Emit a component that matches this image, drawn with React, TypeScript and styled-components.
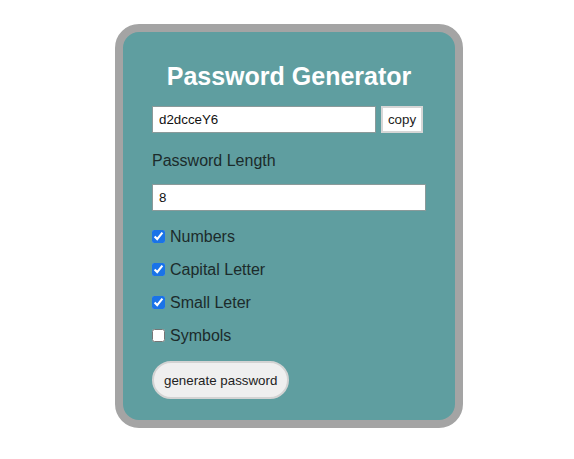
import React from "react";
import styled, { createGlobalStyle } from "styled-components";

const Global = createGlobalStyle`
  html, body { margin: 0; padding: 0; background: #ffffff; }
  body { font-family: "Liberation Sans", Arial, sans-serif; }
`;

const Page = styled.div`
  display: flex;
  justify-content: center;
  padding-top: 24px;
  padding-left: 4px;
`;

const Card = styled.div`
  box-sizing: border-box;
  width: 348px;
  height: 404px;
  border: 8px solid #a4a4a4;
  border-radius: 24px;
  background: #5f9ea0;
  padding: 29px 29px 0 29px;
  display: flex;
  flex-direction: column;
  align-items: flex-start;
`;

const Title = styled.h1`
  align-self: stretch;
  margin: 0;
  text-align: center;
  color: #ffffff;
  font-size: 25px;
  line-height: 30px;
  font-weight: bold;
`;

const Row = styled.div`
  display: flex;
  gap: 5px;
  margin-top: 15px;
`;

const TextInput = styled.input<{ $w: number }>`
  box-sizing: border-box;
  width: ${(p) => p.$w}px;
  height: 27px;
  border: 1px solid #8a9a9a;
  background: #ffffff;
  font-family: "Liberation Sans", Arial, sans-serif;
  font-size: 13.33px;
  color: #111;
  padding: 0 6px;
  outline: none;
`;

const CopyButton = styled.button`
  box-sizing: border-box;
  width: 42px;
  height: 27px;
  border: 2px solid #d6d6d6;
  background: #ffffff;
  font-family: "Liberation Sans", Arial, sans-serif;
  font-size: 13.33px;
  color: #222;
  padding: 0;
`;

const Label = styled.div`
  margin-top: 19px;
  font-size: 16px;
  line-height: 18px;
  color: #1c2b2b;
`;

const LengthWrap = styled.div`
  margin-top: 14px;
`;

const Options = styled.div`
  margin-top: 16px;
  display: flex;
  flex-direction: column;
  gap: 14px;
`;

const Option = styled.label`
  display: flex;
  align-items: center;
  gap: 5px;
  font-size: 16px;
  line-height: 19px;
  color: #1c2b2b;
`;

const Check = styled.input`
  width: 13px;
  height: 13px;
  margin: 0;
  accent-color: #1a73e8;
`;

const Generate = styled.button`
  margin-top: 16px;
  box-sizing: border-box;
  height: 38px;
  padding: 0 10px;
  border: 2px solid #d3d3d3;
  border-radius: 20px;
  background: #efefef;
  font-family: "Liberation Sans", Arial, sans-serif;
  font-size: 13.33px;
  color: #222;
`;

const options: { label: string; checked: boolean }[] = [
  { label: "Numbers", checked: true },
  { label: "Capital Letter", checked: true },
  { label: "Small Leter", checked: true },
  { label: "Symbols", checked: false },
];

export default function App() {
  return (
    <>
      <Global />
      <Page>
        <Card>
          <Title>Password Generator</Title>
          <Row>
            <TextInput $w={224} defaultValue="d2dcceY6" readOnly />
            <CopyButton>copy</CopyButton>
          </Row>
          <Label>Password Length</Label>
          <LengthWrap>
            <TextInput $w={274} defaultValue="8" />
          </LengthWrap>
          <Options>
            {options.map((o) => (
              <Option key={o.label}>
                <Check type="checkbox" defaultChecked={o.checked} />
                {o.label}
              </Option>
            ))}
          </Options>
          <Generate>generate password</Generate>
        </Card>
      </Page>
    </>
  );
}
